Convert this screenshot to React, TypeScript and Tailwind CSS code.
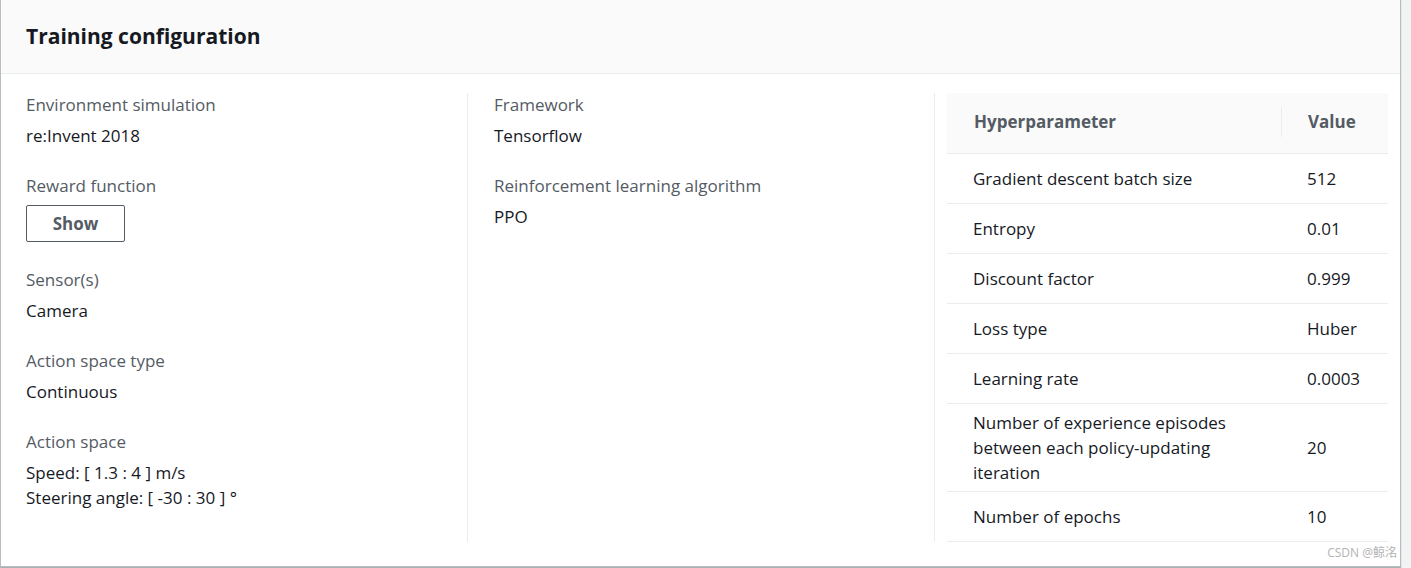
import React from 'react';

const font = { fontFamily: '"Open Sans", "Noto Sans CJK SC", sans-serif' };

type Field = { label: string; values?: string[]; button?: string };

const col1: Field[] = [
  { label: 'Environment simulation', values: ['re:Invent 2018'] },
  { label: 'Reward function', button: 'Show' },
  { label: 'Sensor(s)', values: ['Camera'] },
  { label: 'Action space type', values: ['Continuous'] },
  { label: 'Action space', values: ['Speed: [ 1.3 : 4 ] m/s', 'Steering angle: [ -30 : 30 ] °'] },
];

const col2: Field[] = [
  { label: 'Framework', values: ['Tensorflow'] },
  { label: 'Reinforcement learning algorithm', values: ['PPO'] },
];

const rows = [
  ['Gradient descent batch size', '512'],
  ['Entropy', '0.01'],
  ['Discount factor', '0.999'],
  ['Loss type', 'Huber'],
  ['Learning rate', '0.0003'],
  ['Number of experience episodes between each policy-updating iteration', '20'],
  ['Number of epochs', '10'],
];

function FieldList({ fields }: { fields: Field[] }) {
  return (
    <div className="flex flex-col gap-[25px]">
      {fields.map((f) => (
        <div key={f.label}>
          <div className="text-[17px] leading-[25px] text-[#545b64]">{f.label}</div>
          {f.values && (
            <div className="mt-[6px]">
              {f.values.map((v) => (
                <div key={v} className="text-[17px] leading-[25px] text-[#16191f]">
                  {v}
                </div>
              ))}
            </div>
          )}
          {f.button && (
            <button className="mt-[7px] w-[99px] h-[37px] border border-[#545b64] rounded-[2px] bg-white text-[17px] font-bold text-[#545b64]">
              {f.button}
            </button>
          )}
        </div>
      ))}
    </div>
  );
}

export default function App() {
  return (
    <div className="w-[1411px] h-[568px] bg-[#f2f3f3] overflow-hidden" style={font}>
      <div className="relative w-[1401px] h-[567px] bg-white border-l border-r border-b border-[#b6bec0] shadow-[0_1px_1px_rgba(0,28,36,0.3)]">
        <div className="h-[74px] bg-[#fafafa] border-b border-[#eaeded] pl-[25px] flex items-center">
          <h2 className="text-[21px] font-bold text-[#16191f] leading-[30px] pb-[1px]">Training configuration</h2>
        </div>

        <div className="flex pt-[19px] pb-[24px]">
          <div className="w-[466px] pl-[25px] -mt-[1px]">
            <FieldList fields={col1} />
          </div>
          <div className="w-[467px] border-l border-[#eaeded] pl-[26px]">
            <div className="-mt-[1px]">
              <FieldList fields={col2} />
            </div>
          </div>
          <div className="flex-1 border-l border-[#eaeded] pl-[12px] pr-[12px] h-[449px]">
            <table className="w-full border-collapse">
              <thead>
                <tr className="bg-[#fafafa] border-b border-[#eaeded]">
                  <th className="h-[60px] w-[335px] pl-[27px] pb-[2px] text-left text-[17px] font-bold text-[#545b64]">
                    <div className="border-r border-[#eaeded] h-[30px] flex items-center">Hyperparameter</div>
                  </th>
                  <th className="h-[60px] pl-[26px] pb-[2px] text-left text-[17px] font-bold text-[#545b64]">Value</th>
                </tr>
              </thead>
              <tbody>
                {rows.map(([k, v]) => (
                  <tr key={k} className="border-b border-[#eaeded]">
                    <td className="h-[50px] py-[6px] pl-[26px] pr-[50px] text-[17px] leading-[25px] text-[#16191f]">{k}</td>
                    <td className="py-[6px] pl-[25px] text-[17px] leading-[25px] text-[#16191f]">{v}</td>
                  </tr>
                ))}
              </tbody>
            </table>
          </div>
        </div>

        <div className="absolute right-[3px] bottom-[4px] text-[12px] text-[#b3b3b3]">CSDN @鲸洺</div>
      </div>
    </div>
  );
}
